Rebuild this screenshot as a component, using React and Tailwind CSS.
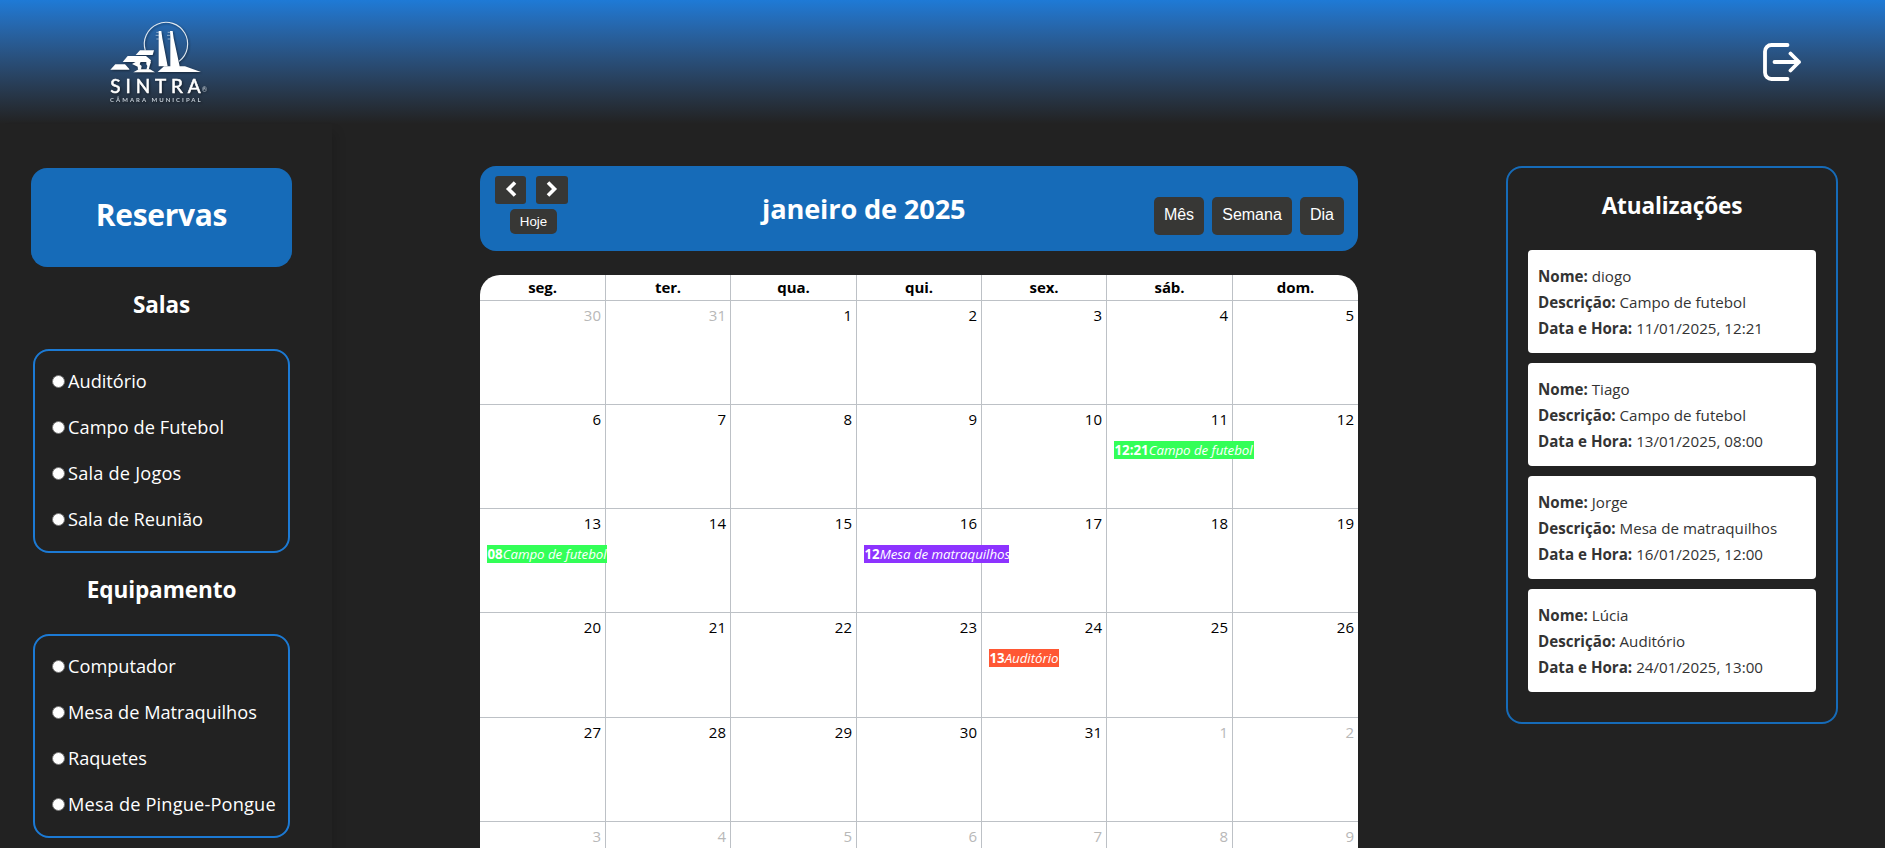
import React from "react";

const SANS = "font-['Open_Sans','Noto_Sans',sans-serif]";

const rooms = [
  ["Auditório", ""],
  ["Campo de Futebol", "tracking-[0.06px]"],
  ["Sala de Jogos", "tracking-[0.2px]"],
  ["Sala de Reunião", ""],
];
const equipment = [
  ["Computador", ""],
  ["Mesa de Matraquilhos", ""],
  ["Raquetes", "tracking-[-0.05px]"],
  ["Mesa de Pingue-Pongue", "tracking-[0.17px]"],
];

const weekdays = ["seg.", "ter.", "qua.", "qui.", "sex.", "sáb.", "dom."];
const days = [
  30, 31, 1, 2, 3, 4, 5, 6, 7, 8, 9, 10, 11, 12, 13, 14, 15, 16, 17, 18, 19, 20,
  21, 22, 23, 24, 25, 26, 27, 28, 29, 30, 31, 1, 2, 3, 4, 5, 6, 7, 8, 9,
];
const events = {
  12: { time: "12:21", title: "Campo de futebol", style: "w-[140px] bg-[#33ff57]" },
  14: { time: "08", title: "Campo de futebol", style: "w-[120px] bg-[#33ff57]" },
  17: { time: "12", title: "Mesa de matraquilhos", style: "w-[145px] bg-[#8d33ff]" },
  25: { time: "13", title: "Auditório", style: "w-[70px] bg-[#ff5733]" },
};

const updates = [
  ["diogo", "Campo de futebol", "11/01/2025, 12:21"],
  ["Tiago", "Campo de futebol", "13/01/2025, 08:00"],
  ["Jorge", "Mesa de matraquilhos", "16/01/2025, 12:00"],
  ["Lúcia", "Auditório", "24/01/2025, 13:00"],
];

function Logo() {
  return (
    <svg
      width="120"
      height="100"
      viewBox="0 0 360 300"
      className="drop-shadow-[1px_1px_1px_rgba(0,0,0,0.45)]"
      fill="#fff"
    >
      <path
        d="M135.800 121A65 65 0 1 1 237 154"
        fill="none"
        stroke="#dfe8f0"
        strokeWidth="3.4"
      />
      <path d="M176 63h8l3 22 16 84h-27V80z" />
      <path d="M210 63h8l3 22 18 84h16l48 17H173l19-17h19V80z" />
      <path
        d="M169 67h8M167 76h10M169 87h9M203 67h8M201 76h10M203 87h9"
        stroke="#c4d5e6"
        strokeWidth="2"
      />
      <path d="M120 121h42l-4 14h-51z" />
      <path d="M83 138h55l15 13-2 5H68z" />
      <path d="M108 155h14l-3 8 6 5-2 11h-9l-1-9-17-8z" />
      <path d="M139 155h14l-4 13-3 11h-7l3-11-3-5z" />
      <path d="M116 178h34l15 9h-65z" />
      <path d="M46 163h29l13 14v2H31z" />
      <text
        x="31"
        y="248"
        textLength="271"
        className="font-['Lato',sans-serif] text-[57px] font-normal"
        stroke="#fff"
        strokeWidth="1.6"
      >
        SINTRA
      </text>
      <text x="305" y="245" className="font-['Lato',sans-serif] text-[20px]" fill="#c3ccd5">
        ®
      </text>
      <text
        x="30"
        y="275"
        textLength="272"
        className="font-['Lato',sans-serif] text-[18px] font-bold"
        fill="#c3ccd5"
      >
        CÂMARA MUNICIPAL
      </text>
    </svg>
  );
}

function LogoutIcon() {
  return (
    <svg
      width="40"
      height="40"
      viewBox="0 0 40 40"
      fill="none"
      stroke="#fff"
      strokeWidth="3.8"
      strokeLinecap="round"
      strokeLinejoin="round"
    >
      <path d="M25.500 3H9.500a6.500 6.500 0 0 0-6.500 6.500v21a6.500 6.500 0 0 0 6.500 6.500H25.500" />
      <path d="M12.500 20h24.500M28.500 11.500l8.500 8.500-8.500 8.500" />
    </svg>
  );
}

function OptionBox({ name, options }) {
  return (
    <div className="ml-[2px] flex h-[204px] w-[257px] flex-col rounded-2xl border-2 border-[#1c7ad4] pt-[7px] pl-[17px]">
      {options.map(([label, tracking]) => (
        <label key={label} className="flex h-[46px] shrink-0 items-center gap-[3px]">
          <input
            type="radio"
            name={name}
            className="size-[13px] shrink-0 appearance-none rounded-full border border-[#767676] bg-white"
          />
          <span className={`whitespace-nowrap text-[18.200px] leading-[26px] text-white ${tracking}`}>
            {label}
          </span>
        </label>
      ))}
    </div>
  );
}

function Sidebar() {
  return (
    <aside className="h-full w-[332px] shrink-0 pl-[31px] pt-[44px] shadow-[4px_8px_10px_rgba(0,0,0,0.14)]">
      <div className="flex h-[99px] w-[261px] items-center justify-center rounded-2xl bg-[#166bb8] pb-[5px]">
        <h1 className="text-[30px] leading-[44px] font-bold tracking-[-0.3px] text-white">Reservas</h1>
      </div>
      <h2 className="flex h-[82px] w-[261px] items-center justify-center pb-[7px] text-[22.500px] leading-[33px] font-bold tracking-[-0.1px] text-white">
        Salas
      </h2>
      <OptionBox name="sala" options={rooms} />
      <h2 className="flex h-[81px] w-[261px] items-center justify-center pb-[8px] text-[22.600px] leading-[33px] font-bold tracking-[-0.1px] text-white">
        Equipamento
      </h2>
      <OptionBox name="equipamento" options={equipment} />
    </aside>
  );
}

function Chevron({ d }) {
  return (
    <svg width="14" height="16" viewBox="0 0 14 16" fill="none" stroke="#fff" strokeWidth="3.6">
      <path d={d} />
    </svg>
  );
}

function CalendarBar() {
  const view =
    "h-[38px] rounded-[5px] bg-[#373735] font-['Liberation_Sans',Arial,sans-serif] text-[16px] text-white pb-[2px]";
  return (
    <div className="flex h-[85px] w-[878px] rounded-2xl bg-[#166bb8]">
      <div className="w-[282px] pl-[15px] pt-[10px]">
        <div className="flex gap-[10px]">
          <button className="flex h-[28px] w-[31px] items-start justify-center rounded-[3px] bg-[#373735] pt-[5px]">
            <Chevron d="M11 1.500 4.500 8l6.500 6.500" />
          </button>
          <button className="flex h-[28px] w-[32px] items-start justify-center rounded-[3px] bg-[#373735] pt-[5px]">
            <Chevron d="M3 1.500 9.500 8 3 14.500" />
          </button>
        </div>
        <button className="mt-[5px] ml-[15px] flex h-[25px] w-[47px] items-center justify-center rounded-[5px] bg-[#373735] font-['Liberation_Sans',Arial,sans-serif] text-[13.333px] text-white">
          Hoje
        </button>
      </div>
      <h2 className="flex-1 whitespace-nowrap pt-[23px] text-[27.200px] leading-[40px] font-bold tracking-[-0.15px] text-white">
        janeiro de 2025
      </h2>
      <div className="flex gap-[8px] pt-[31px] pr-[14px]">
        <button className={`w-[50px] ${view}`}>Mês</button>
        <button className={`w-[80px] ${view}`}>Semana</button>
        <button className={`w-[44px] ${view}`}>Dia</button>
      </div>
    </div>
  );
}

function Calendar() {
  return (
    <div className="mt-[24px] w-[878px] overflow-hidden rounded-t-[20px] bg-white text-black">
      <div className="grid h-[26px] grid-cols-[126px_125px_126px_125px_125px_126px_125px] border-b border-[#bdc1c6]">
        {weekdays.map((day) => (
          <div
            key={day}
            className="border-r border-[#bdc1c6] pt-[2px] text-center text-[15px] leading-[21px] font-bold tracking-[-0.1px] last:border-r-0"
          >
            {day}
          </div>
        ))}
      </div>
      <div className="grid grid-cols-[126px_125px_126px_125px_125px_126px_125px] grid-rows-[104px_104px_104px_105px_104px_104px]">
        {days.map((day, i) => {
          const event = events[i];
          const muted = i < 2 || i > 32;
          return (
            <div
              key={i}
              className="min-w-0 border-r border-b border-[#bdc1c6] pt-[4px] [&:nth-child(7n)]:border-r-0"
            >
              <div
                className={`pr-[4px] text-right text-[15px] leading-[21px] ${muted ? "text-[#b8b8b8]" : "text-black"}`}
              >
                {day}
              </div>
              {event && (
                <div
                  className={`relative z-10 mt-[11px] ml-[7px] flex h-[18px] overflow-hidden whitespace-nowrap pl-[0.5px] text-[13.300px] leading-[19px] text-white ${event.style}`}
                >
                  <b>{event.time}</b>
                  <i className="tracking-[-0.05px]">{event.title}</i>
                </div>
              )}
            </div>
          );
        })}
      </div>
    </div>
  );
}

function Updates() {
  return (
    <aside className="ml-[148px] mt-[42px] flex h-[558px] w-[332px] flex-col items-center rounded-2xl border-2 border-[#166bb8] pt-[20px]">
      <h2 className="h-[62px] text-[22.600px] leading-[36px] font-bold tracking-[-0.15px] text-white">
        Atualizações
      </h2>
      <div className="flex flex-col gap-[10px]">
        {updates.map(([name, description, date]) => (
          <div
            key={date}
            className="h-[103px] w-[288px] rounded-[4px] bg-white pt-[13px] pl-[10px] text-[15.150px] leading-[26px] whitespace-nowrap text-[#333]"
          >
            <p>
              <b>Nome:</b> {name}
            </p>
            <p>
              <b>Descrição:</b> {description}
            </p>
            <p>
              <b>Data e Hora:</b> {date}
            </p>
          </div>
        ))}
      </div>
    </aside>
  );
}

export default function App() {
  return (
    <div className={`flex h-[848px] w-[1885px] flex-col overflow-hidden bg-[#222222] ${SANS}`}>
      <header className="flex h-[124px] shrink-0 items-start justify-between bg-linear-to-b from-[#1e7ad6] to-[#222222] pr-[83px] pl-[100px]">
        <div className="pt-[10px]">
          <Logo />
        </div>
        <button className="pt-[42px]">
          <LogoutIcon />
        </button>
      </header>
      <div className="flex min-h-0 flex-1 items-start">
        <Sidebar />
        <main className="ml-[148px] shrink-0 pt-[42px]">
          <CalendarBar />
          <Calendar />
        </main>
        <Updates />
      </div>
    </div>
  );
}
